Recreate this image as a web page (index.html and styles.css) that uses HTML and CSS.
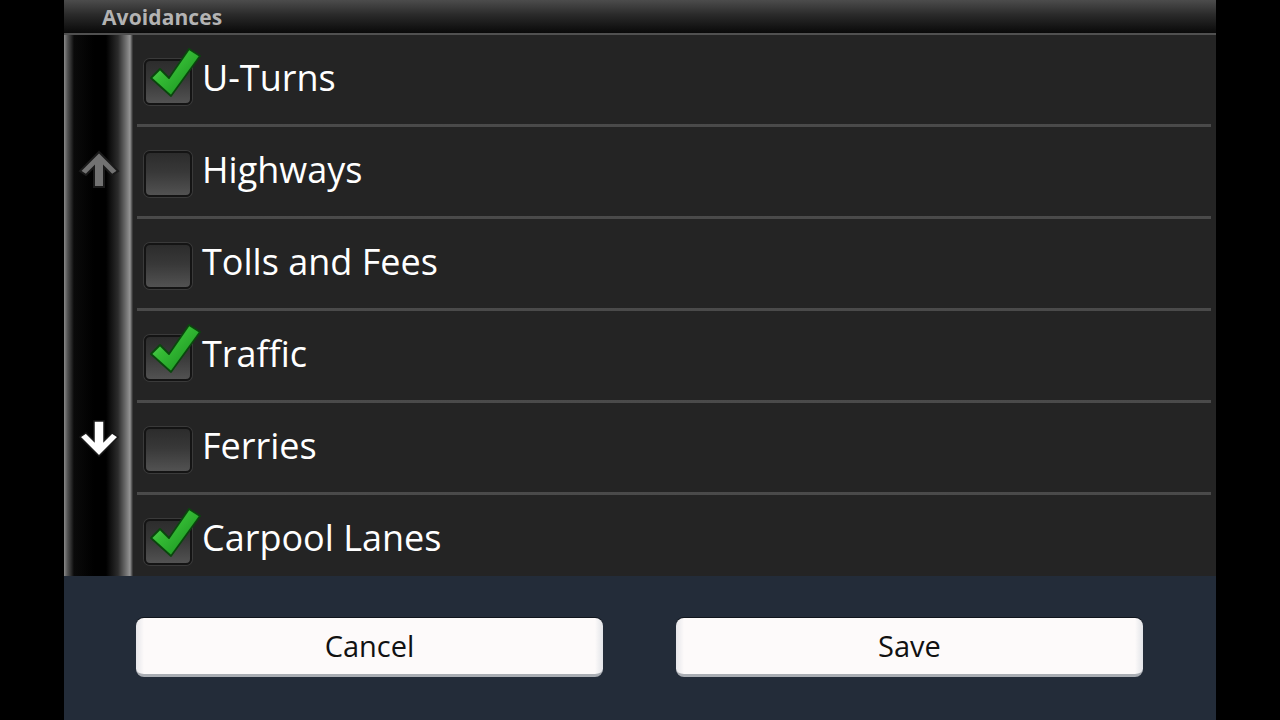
FILE: index.html
```html
<!DOCTYPE html>
<html>
<head>
<meta charset="utf-8">
<link rel="stylesheet" href="styles.css">
</head>
<body>
<div class="screen">
  <div class="header"><span class="title">Avoidances</span></div>
  <div class="main">
    <div class="scroller">
      <div class="arrow up">
        <svg width="42" height="40" viewBox="0 0 42 40"><path d="M21 2 L40 21 L34 25 L26 17 L26 37 L16 37 L16 17 L8 25 L2 21 Z" fill="#727272" stroke="#1a1a1a" stroke-width="2" stroke-linejoin="miter"/></svg>
      </div>
      <div class="arrow down">
        <svg width="42" height="40" viewBox="0 0 42 40"><path d="M21 38 L40 19 L34 15 L26 23 L26 3 L16 3 L16 23 L8 15 L2 19 Z" fill="#ffffff" stroke="#1a1a1a" stroke-width="1.5" stroke-linejoin="miter"/></svg>
      </div>
    </div>
    <div class="list">
      <div class="row"><div class="box checked"><svg class="check" width="52" height="52" viewBox="0 0 52 52"><defs><linearGradient id="g1" x1="0" y1="0" x2="1" y2="1"><stop offset="0" stop-color="#7ae87a"/><stop offset="0.4" stop-color="#35bb35"/><stop offset="1" stop-color="#138a1b"/></linearGradient></defs><path d="M1 31 L10 22 L19 31 L39 2 L50 9 L21 49 Z" fill="url(#g1)" stroke="#0a470d" stroke-width="1.8" stroke-linejoin="round"/></svg></div><span class="label">U-Turns</span></div>
      <div class="row"><div class="box"></div><span class="label">Highways</span></div>
      <div class="row"><div class="box"></div><span class="label">Tolls and Fees</span></div>
      <div class="row"><div class="box checked"><svg class="check" width="52" height="52" viewBox="0 0 52 52"><path d="M1 31 L10 22 L19 31 L39 2 L50 9 L21 49 Z" fill="url(#g1)" stroke="#0a470d" stroke-width="1.8" stroke-linejoin="round"/></svg></div><span class="label">Traffic</span></div>
      <div class="row"><div class="box"></div><span class="label">Ferries</span></div>
      <div class="row"><div class="box checked"><svg class="check" width="52" height="52" viewBox="0 0 52 52"><path d="M1 31 L10 22 L19 31 L39 2 L50 9 L21 49 Z" fill="url(#g1)" stroke="#0a470d" stroke-width="1.8" stroke-linejoin="round"/></svg></div><span class="label">Carpool Lanes</span></div>
    </div>
  </div>
  <div class="footer">
    <div class="btn">Cancel</div>
    <div class="btn">Save</div>
  </div>
</div>
</body>
</html>
```
FILE: styles.css
```css
html, body {
  margin: 0;
  padding: 0;
  background: #000;
  width: 1280px;
  height: 720px;
  overflow: hidden;
  font-family: "Open Sans", "DejaVu Sans", sans-serif;
}
.screen {
  width: 1152px;
  height: 720px;
  margin: 0 auto;
  display: flex;
  flex-direction: column;
}
.header {
  height: 33px;
  border-bottom: 2px solid #505050;
  background: linear-gradient(180deg, #4c4c4c 0%, #2a2a2a 45%, #090909 100%);
  display: flex;
  align-items: center;
  padding-left: 38px;
}
.title {
  color: #b3b3b3;
  font-weight: 700;
  font-size: 21px;
  letter-spacing: 0.1px;
}
.main {
  height: 541px;
  display: flex;
  overflow: hidden;
  background: #242424;
}
.scroller {
  width: 69px;
  flex: none;
  background: linear-gradient(90deg, #8a8a8a 0px, #5a5a5a 3px, #0a0a0a 10px, #000 30px, #000 42px, #2c2c2c 54px, #707070 62px, #959595 66px, #4a4a4a 68px, #2a2a2a 69px);
  position: relative;
}
.arrow {
  position: absolute;
  left: 14px;
}
.arrow.up { top: 115px; }
.arrow.down { top: 383px; }
.list {
  flex: 1;
  display: flex;
  flex-direction: column;
}
.row {
  flex: none;
  height: 89px;
  border-bottom: 3px solid transparent;
  border-image: linear-gradient(180deg, #0f0f0f 0, #0f0f0f 33%, #5a5a5a 34%, #4a4a4a 100%) 1;
  margin: 0 5px 0 4px;
  display: flex;
  align-items: center;
  padding-left: 7px;
}
.box {
  position: relative;
  width: 44px;
  height: 42px;
  flex: none;
  margin-top: 5px;
  border: 2px solid #141414;
  border-radius: 6px;
  box-shadow: 0 0 0 1px #3a3a3a;
  background: linear-gradient(180deg, #2c2c2c 0%, #383838 45%, #525252 100%);
}
.check {
  position: absolute;
  left: 4px;
  top: -14px;
}
.label {
  color: #ffffff;
  font-size: 36px;
  margin-left: 10px;
  margin-bottom: 3px;
  line-height: 1;
}
.footer {
  flex: 1;
  background: #232c39;
  display: grid;
  grid-template-columns: 467px 467px;
  column-gap: 73px;
  padding: 42px 0 0 72px;
  align-content: start;
}
.btn {
  height: 56px;
  border-radius: 8px;
  background: linear-gradient(90deg, #e6e6ea 0px, #fdfafa 8px, #fdfafa calc(100% - 8px), #e2e4e8 100%);
  border-bottom: 3px solid #a9adb3;
  box-shadow: 0 -1px 0 #10151c;
  color: #111;
  font-size: 29px;
  display: flex;
  align-items: center;
  justify-content: center;
  padding-bottom: 1px;
  box-sizing: border-box;
  height: 59px;
}
```
